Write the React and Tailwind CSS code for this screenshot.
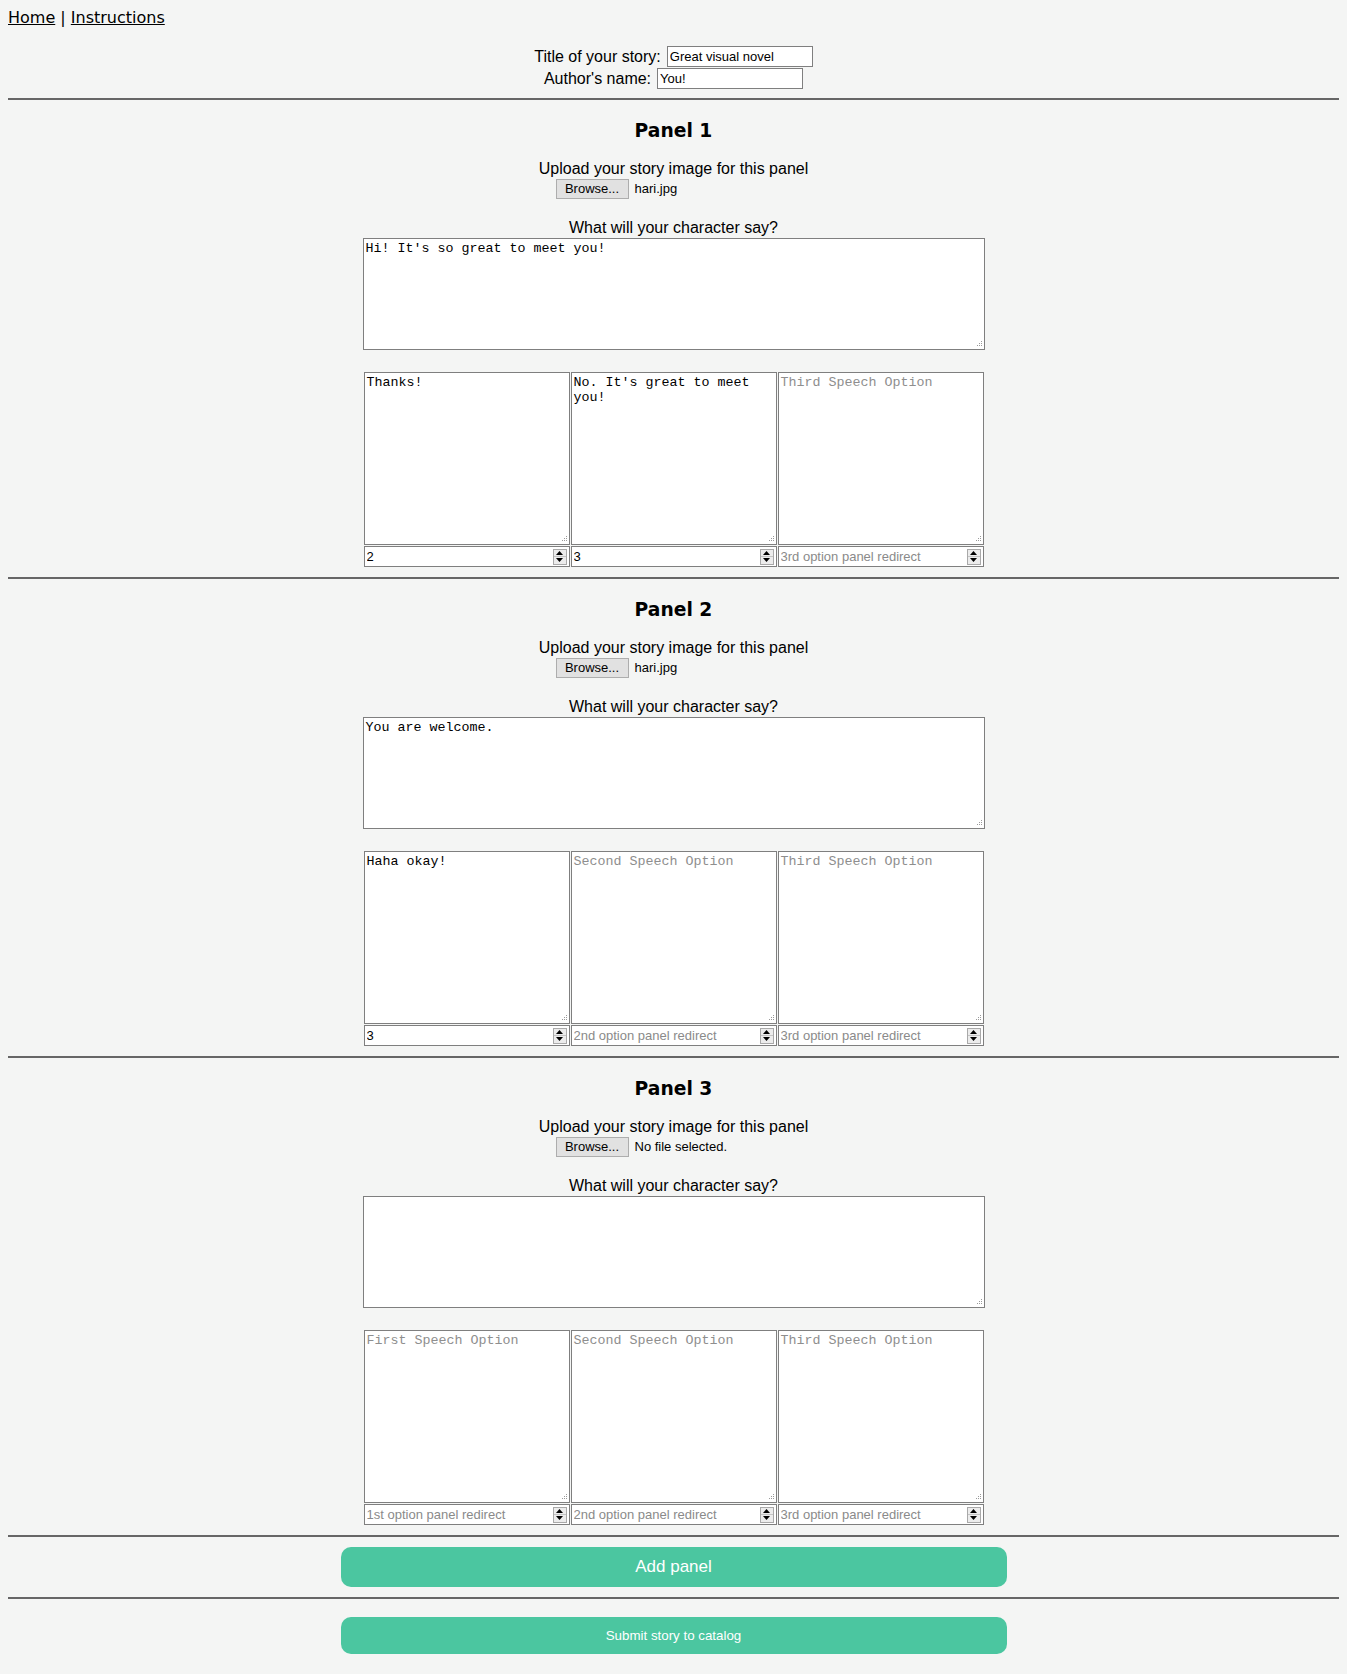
import { useState } from "react"

const panels = [
  { file: "hari.jpg", say: "Hi! It's so great to meet you!", opts: ["Thanks!", "No. It's great to meet you!", ""], redir: ["2", "3", ""] },
  { file: "hari.jpg", say: "You are welcome.", opts: ["Haha okay!", "", ""], redir: ["3", "", ""] },
  { file: null, say: "", opts: ["", "", ""], redir: ["", "", ""] },
]

const optHints = ["First Speech Option", "Second Speech Option", "Third Speech Option"]
const redirHints = ["1st option panel redirect", "2nd option panel redirect", "3rd option panel redirect"]

function Grip() {
  return (
    <svg width="6" height="6" viewBox="0 0 6 6" className="absolute bottom-[3px] right-[3px]" fill="#9a9a9a">
      <rect x="5" y="0" width="1" height="1" />
      <rect x="3" y="2" width="1" height="1" />
      <rect x="5" y="2" width="1" height="1" />
      <rect x="1" y="4" width="1" height="1" />
      <rect x="3" y="4" width="1" height="1" />
      <rect x="5" y="4" width="1" height="1" />
    </svg>
  )
}

function Area({ value, hint, h }) {
  return (
    <div className="relative">
      <textarea
        defaultValue={value}
        placeholder={hint}
        spellCheck={false}
        className={`block w-full ${h} resize-none border border-[#7f7f7f] bg-white p-[2px] font-['Liberation_Mono',monospace] text-[13.33px] leading-[15px] text-black outline-none placeholder:text-[#8e8e8e]`}
      />
      <Grip />
    </div>
  )
}

function NumberBox({ value, hint }) {
  return (
    <div className="mt-px flex h-[21px] items-center border border-[#7f7f7f] bg-white">
      <input
        defaultValue={value}
        placeholder={hint}
        className="h-full min-w-0 flex-1 bg-transparent px-[2px] font-['Liberation_Sans',Arial,sans-serif] text-[13px] text-black outline-none placeholder:text-[#8a8a8a]"
      />
      <div className="mr-[2px] flex h-[16px] w-[14px] flex-col border border-[#a9a9a9] bg-[#ececec]">
        <div className="flex flex-1 items-center justify-center border-b border-[#c4c4c4]">
          <svg width="7" height="4" viewBox="0 0 7 4"><path d="M3.5 0L7 4H0z" fill="#000" /></svg>
        </div>
        <div className="flex flex-1 items-center justify-center">
          <svg width="7" height="4" viewBox="0 0 7 4"><path d="M0 0h7L3.5 4z" fill="#000" /></svg>
        </div>
      </div>
    </div>
  )
}

function Rule() {
  return <div className="h-[2px] bg-[#666666]" />
}

function Panel({ n, p }) {
  return (
    <section>
      <Rule />
      <h3 className="mt-[20px] text-center font-['DejaVu_Sans',Verdana,sans-serif] text-[18.72px] font-bold leading-[22px]">Panel {n}</h3>
      <p className="mt-[18px] text-center text-[16px] leading-[18px]">Upload your story image for this panel</p>
      <div className="mx-auto mt-px flex h-[20px] w-[236px] items-center gap-[6px] font-['Liberation_Sans',Arial,sans-serif] text-[13px]">
        <button className="h-[20px] w-[73px] border border-[#adadad] bg-[#e1e1e1] text-[13px] leading-[18px]">Browse...</button>
        <span>{p.file ?? "No file selected."}</span>
      </div>
      <p className="mt-[20px] text-center text-[16px] leading-[18px]">What will your character say?</p>
      <div className="mx-auto mt-px w-[622px]">
        <Area value={p.say} hint="" h="h-[112px]" />
      </div>
      <div className="mx-auto mt-[22px] grid w-[622px] grid-cols-3 gap-px px-px">
        {p.opts.map((o, i) => (
          <div key={i}>
            <Area value={o} hint={optHints[i]} h="h-[173px]" />
            <NumberBox value={p.redir[i]} hint={redirHints[i]} />
          </div>
        ))}
      </div>
      <div className="h-[10px]" />
    </section>
  )
}

export default function App() {
  const [title] = useState("Great visual novel")
  return (
    <div className="min-h-[1674px] bg-[#f4f5f4] px-2 pb-[22px] pt-2 font-['Liberation_Sans',Arial,sans-serif] text-black">
      <nav className="font-['DejaVu_Sans',Verdana,sans-serif] text-[16px] leading-[19px]">
        <a href="#" className="underline">Home</a> | <a href="#" className="underline">Instructions</a>
      </nav>

      <div className="mt-[19px] flex h-[21px] items-center justify-center gap-[6px] text-[16px]">
        <label>Title of your story:</label>
        <input defaultValue={title} className="h-[21px] w-[146px] border border-[#7f7f7f] bg-white px-[2px] text-[13px] outline-none" />
      </div>
      <div className="mt-px flex h-[21px] items-center justify-center gap-[6px] text-[16px]">
        <label>Author's name:</label>
        <input defaultValue="You!" className="h-[21px] w-[146px] border border-[#7f7f7f] bg-white px-[2px] text-[13px] outline-none" />
      </div>
      <div className="h-[9px]" />

      {panels.map((p, i) => <Panel key={i} n={i + 1} p={p} />)}

      <Rule />
      <button className="mx-auto mt-[10px] block h-[40px] w-[666px] rounded-[10px] bg-[#4bc6a0] text-[17px] text-white">Add panel</button>
      <div className="mt-[10px]"><Rule /></div>
      <button className="mx-auto mt-[18px] block h-[37px] w-[666px] rounded-[10px] bg-[#4bc6a0] text-[13.33px] text-white">Submit story to catalog</button>
    </div>
  )
}
